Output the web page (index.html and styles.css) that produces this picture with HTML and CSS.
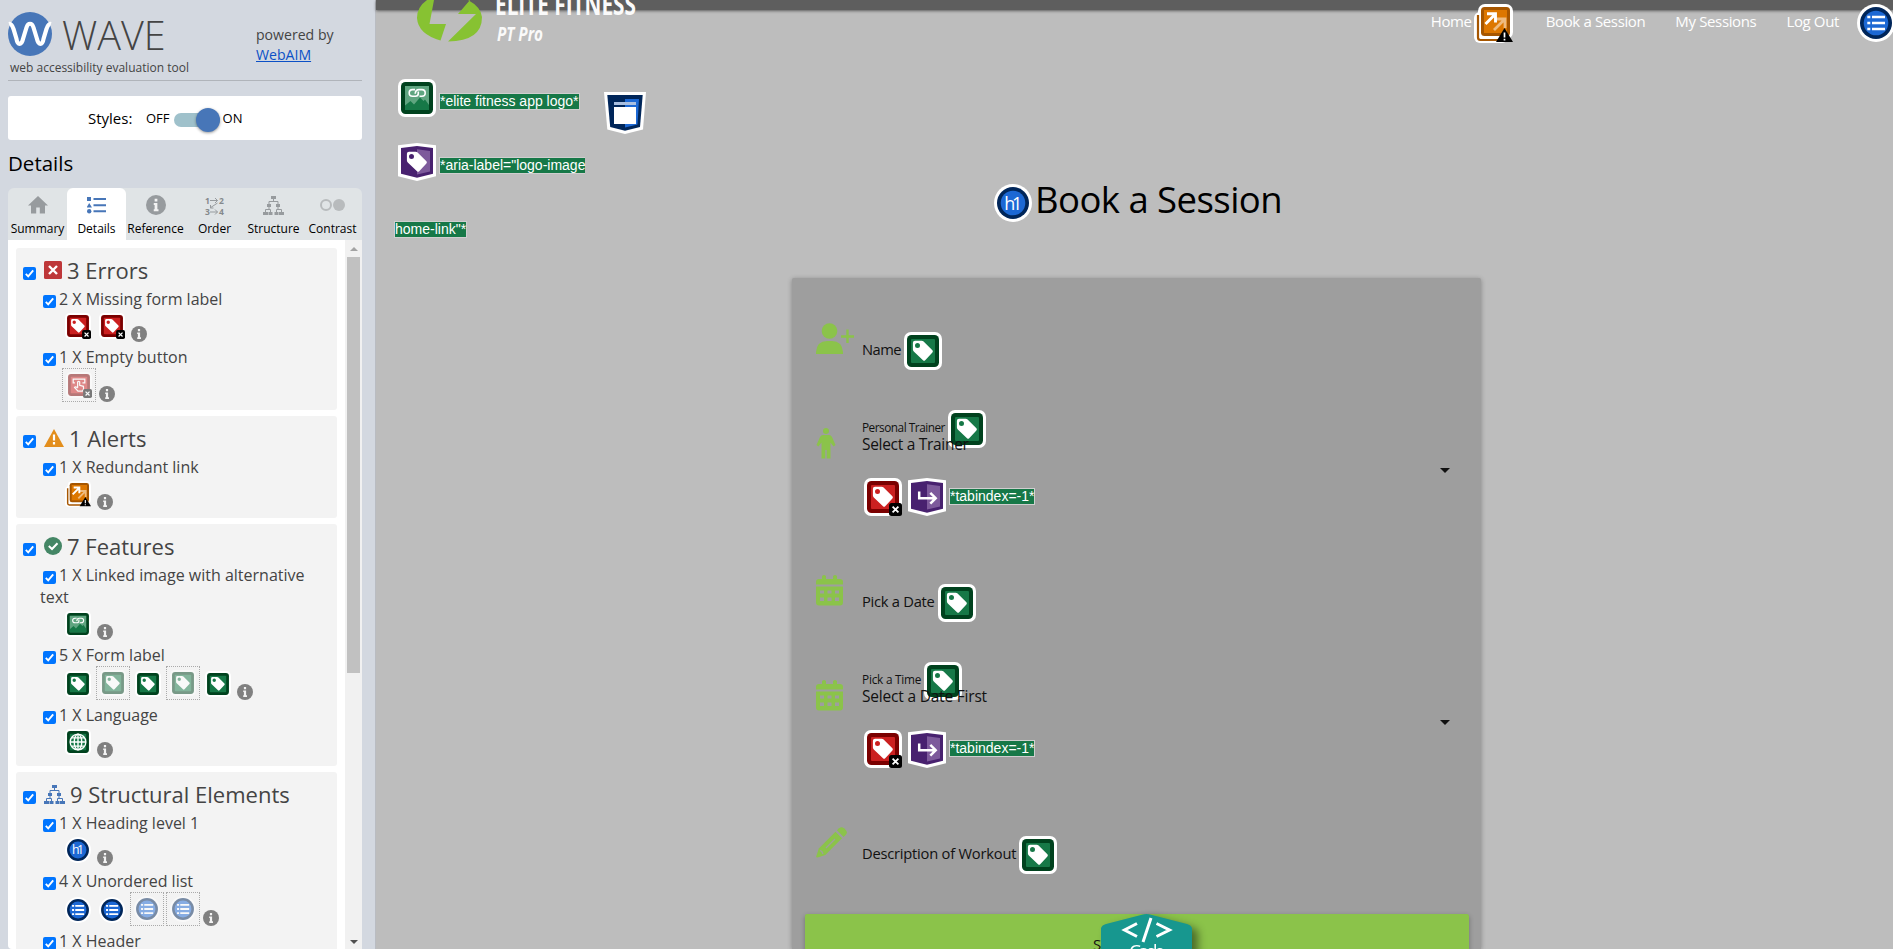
FILE: index.html
```html
<!DOCTYPE html>
<html lang="en">
<head>
<meta charset="utf-8">
<title>Book a Session</title>
<link rel="stylesheet" href="styles.css">
</head>
<body>
<svg class="defs" width="0" height="0" aria-hidden="true">
  <symbol id="tagshape" viewBox="0 0 38 38"><path fill-rule="evenodd" d="M11 8.7H17.6Q18.8 8.7 19.6 9.5L28.4 18.2Q29.4 19.3 28.4 20.4L21.2 28.2Q20.1 29.3 19 28.2L9.8 19.4Q8.9 18.5 8.9 17.4V10.8Q8.9 8.7 11 8.7ZM13.5 11A2.5 2.5 0 1 0 13.5 16A2.5 2.5 0 1 0 13.5 11Z" fill="#fff"/></symbol>
  <symbol id="xbadge" viewBox="0 0 38 38"><rect x="25" y="25" width="13" height="13" rx="2.5" fill="#000"/><path d="M28.6 28.6L34.4 34.4M34.4 28.6L28.6 34.4" stroke="#fff" stroke-width="1.8"/></symbol>
  <symbol id="greenbox" viewBox="0 0 38 38"><rect width="38" height="38" rx="7" fill="#fff"/><rect x="3" y="3" width="32" height="32" rx="4.5" fill="#00421e"/><rect x="7" y="7" width="24" height="24" rx="1" fill="#167847"/></symbol>
  <symbol id="redbox" viewBox="0 0 38 38"><rect width="38" height="38" rx="7" fill="#fff"/><rect x="3" y="3" width="32" height="32" rx="4.5" fill="#7b0000"/><rect x="7" y="7" width="24" height="24" rx="1" fill="#cb2020"/></symbol>
  <symbol id="bluedisc" viewBox="0 0 38 38"><circle cx="19" cy="19" r="19" fill="#fff"/><circle cx="19" cy="19" r="16" fill="#00265a"/><circle cx="19" cy="19" r="12.3" fill="#1c68d4"/></symbol>
  <symbol id="purplehex" viewBox="0 0 38 38"><path d="M0 2.3L19 0L38 2.3V33.3L19 38L0 33.3Z" fill="#fff"/><path d="M3 5L19 3L35 5V30.8L19 34.8L3 30.8Z" fill="#48216f"/><path d="M19 6.2L32 8V28.4L19 31.6Z" fill="#7d5a9b"/></symbol>
  <symbol id="label-ok" viewBox="0 0 38 38"><use href="#greenbox"/><use href="#tagshape"/></symbol>
  <symbol id="label-missing" viewBox="0 0 38 38"><use href="#redbox"/><use href="#tagshape"/><use href="#xbadge"/></symbol>
  <symbol id="button-empty" viewBox="0 0 38 38"><use href="#redbox"/><g fill="none" stroke="#fff" stroke-width="1.8"><path d="M13 16H10.5V10.5H27.5V16H24"/><path d="M17 23V14.5Q18.5 13 20 14.5V19.500L25.500 21Q26.500 25 24 28H17.500L12.500 22.500Q14 20.500 17 23.500"/></g><use href="#xbadge"/></symbol>
  <symbol id="aria-label" viewBox="0 0 38 38"><use href="#purplehex"/><use href="#tagshape"/></symbol>
  <symbol id="tabindex" viewBox="0 0 38 38"><use href="#purplehex"/><path d="M11.200 13.500V20.200H27.500M22.300 14.800L27.700 20.200L22.300 25.600" fill="none" stroke="#fff" stroke-width="2.500"/></symbol>
  <symbol id="image-link" viewBox="0 0 38 38"><use href="#greenbox"/><rect x="7" y="7" width="24" height="24" fill="#5fa580"/><path d="M7 26.500L12.500 22L16 25.500L22 18.500L25.500 22L27 20.500L31 26V31H7Z" fill="#167847"/><path d="M17 10.600H14.500A3.300 3.300 0 0 0 14.500 17.200H17.300Q20.300 17.200 20.300 14.500V12.500M21.500 17.200H23.900A3.300 3.300 0 0 0 23.900 10.600H20.900Q17.500 10.600 17.200 14.800" fill="none" stroke="#fff" stroke-width="1.600"/></symbol>
  <symbol id="lang" viewBox="0 0 38 38"><use href="#greenbox"/><g fill="none" stroke="#fff" stroke-width="2"><circle cx="19" cy="19" r="11.500"/><ellipse cx="19" cy="19" rx="5.500" ry="11.500"/><path d="M19 7.500V30.500M7.500 19H30.500M9.500 13H28.500M9.500 25H28.500"/></g></symbol>
  <symbol id="link-redundant" viewBox="0 0 39 39"><rect x="0" y="8" width="34" height="31" rx="6" fill="#fff"/><rect x="4" y="0" width="35" height="35" rx="7" fill="#fff"/><path d="M4 11V33.500Q4 36 6.500 36H26" fill="none" stroke="#a65600" stroke-width="2.200"/><rect x="7" y="3" width="29" height="29" rx="3.500" fill="#a65600"/><rect x="10" y="6" width="23" height="23" fill="#dd7700"/><path d="M20 26L30 16M22 15H31V24" fill="none" stroke="#eebb80" stroke-width="2.800"/><path d="M11.500 20L20.500 11M13 9.700H21.500V18.500" fill="none" stroke="#fff" stroke-width="2.900"/><path d="M30.500 24L39 38H22Z" fill="#000"/><path d="M30.500 28.500V33.500M30.500 34.800V36.500" stroke="#fff" stroke-width="1.700"/></symbol>
  <symbol id="ul" viewBox="0 0 38 38"><use href="#bluedisc"/><path d="M15 13H28M15 19H28M15 25H28" stroke="#fff" stroke-width="2.700"/><path d="M10.300 13H13.300M10.300 19H13.300M10.300 25H13.300" stroke="#fff" stroke-width="2.700"/></symbol>
  <symbol id="h1" viewBox="0 0 38 38"><use href="#bluedisc"/><text x="10.300" y="25.500" class="h1-glyph" textLength="17.500">h1</text></symbol>
  <symbol id="header-el" viewBox="0 0 42 42"><path d="M0 0H42L39 37.500L21 42L3.300 37.500Z" fill="#fff"/><path d="M3.300 3H38.700L36 35L21 38.800L6.200 35Z" fill="#00265a"/><path d="M21 7H35L33.500 32.500L21 35.500Z" fill="#1c68d4"/><rect x="10" y="10" width="22" height="3" fill="#a9bfe0"/><rect x="10" y="15" width="22" height="17" fill="#fff"/></symbol>
  <symbol id="info" viewBox="0 0 16 16"><circle cx="8" cy="8" r="8" fill="currentColor"/><path d="M6.900 3H9.100V5.200H6.900ZM6.200 6.400H9.100V11.300H10V12.900H6.200V11.300H6.900V8H6.200Z" fill="#f3f3f3"/></symbol>
  <symbol id="tree" viewBox="0 0 21 19"><g fill="currentColor"><rect x="8" width="5" height="3"/><rect x="4" y="8" width="4" height="3"/><rect x="13" y="8" width="4" height="3"/><rect y="16" width="5" height="3"/><rect x="5.500" y="16" width="4" height="3"/><rect x="11.500" y="16" width="4" height="3"/><rect x="16" y="16" width="5" height="3"/></g><path d="M10.500 3V5.500M6 8V5.500H15V8M6 11V13.500M15 11V13.500M2.500 16V13.500H7.500V16M13.500 16V13.500H18.500V16" fill="none" stroke="currentColor"/></symbol>
  <symbol id="check" viewBox="0 0 13 13"><rect width="13" height="13" rx="2" fill="#0075ff"/><path d="M2.800 6.900L5.200 9.300L10.200 3.400" fill="none" stroke="#fff" stroke-width="1.900"/></symbol>
  <symbol id="calendar" viewBox="0 0 27 31"><path fill-rule="evenodd" d="M6 1.500Q6 0 8 0Q10 0 10 1.500V4H17V1.500Q17 0 19 0Q21 0 21 1.500V4H24Q27 4 27 7V9.500H0V7Q0 4 3 4H6ZM0 11.500H27V27.500Q27 30.500 24 30.500H3Q0 30.500 0 27.500ZM4 15.500V18.500H8V15.500ZM11.500 15.500V18.500H15.500V15.500ZM19 15.500V18.500H23V15.500ZM4 22.500V26H8V22.500ZM11.500 22.500V26H15.500V22.500ZM19 22.500V26H23V22.500Z" fill="#8bc34a"/></symbol>
</svg>

<div class="app">
  <aside class="sidebar">
    <header class="brand">
      <div class="brand-main">
        <div class="brand-row">
          <svg width="44" height="44" viewBox="0 0 44 44"><circle cx="22" cy="22" r="22" fill="#4776b8"/><path d="M1 12C3 11.500 4.500 14 5.500 17L8.500 27C9.500 33.500 13.500 33.500 15 27L18.500 15.500C20 10.500 24 10.500 25.500 15.500L29 27C30.500 33.500 34.500 33.500 35.500 27L38.500 17C39.500 14 41 11.500 43 12" fill="none" stroke="#fff" stroke-width="4.200"/></svg>
          <span class="brand-name">WAVE</span>
        </div>
        <div class="tagline">web accessibility evaluation tool</div>
      </div>
      <div class="powered">powered by<br><a>WebAIM</a></div>
    </header>
    <div class="styles-box">
      <span class="styles-label">Styles:</span><span class="tg">OFF</span><span class="switch"><i></i></span><span class="tg">ON</span>
    </div>
    <h2 class="details">Details</h2>
    <nav class="tabs">
      <div class="tab"><svg width="20" height="18" viewBox="0 0 20 18"><path d="M10 0L20 9.500H17V17.500H11.800V11.500H8.200V17.500H3V9.500H0Z" fill="#979b9e"/></svg><span>Summary</span></div>
      <div class="tab active"><svg width="19" height="17" viewBox="0 0 19 17"><path d="M0 0H4V4H0ZM2.200 6L5 10.500H-.5Z" fill="#4776b8"/><circle cx="2.200" cy="14.300" r="2.200" fill="#4776b8"/><path d="M6.500 2H19M6.500 8.200H19M6.500 14.300H19" stroke="#4776b8" stroke-width="1.900"/></svg><span>Details</span></div>
      <div class="tab"><svg width="20" height="20"><use href="#info"/></svg><span>Reference</span></div>
      <div class="tab"><svg width="20" height="19" viewBox="0 0 20 19" class="order"><text x="0" y="7.500">1</text><text x="14" y="7.500">2</text><text x="0" y="19">3</text><text x="14" y="19">4</text><path d="M5 4.500H12.500M10 2L12.500 4.500L10 7M5 16H12.500M10 13.500L12.500 16L10 18.500M12.500 7L5 12M5.500 9V12H8.500" fill="none" stroke="#979b9e"/></svg><span>Order</span></div>
      <div class="tab"><svg width="21" height="19"><use href="#tree"/></svg><span>Structure</span></div>
      <div class="tab"><svg width="25" height="12" viewBox="0 0 25 12"><circle cx="6" cy="6" r="5" fill="none" stroke="#b8bbbd" stroke-width="2"/><circle cx="19" cy="6" r="6" fill="#b8bbbd"/></svg><span>Contrast</span></div>
    </nav>
    <div class="panel">
      <div class="cards">
        <section class="card">
          <h3 class="ttl"><svg class="cb"><use href="#check"/></svg><svg class="g18" viewBox="0 0 18 18"><rect width="18" height="18" rx="1.500" fill="#be3739"/><path d="M5 5L13 13M13 5L5 13" stroke="#fff" stroke-width="2.400"/></svg><span>3 Errors</span></h3>
          <p class="item"><svg class="cb"><use href="#check"/></svg><span>2 X Missing form label</span></p>
          <div class="icons"><svg class="ic"><use href="#label-missing"/></svg><svg class="ic"><use href="#label-missing"/></svg><svg class="inf"><use href="#info"/></svg></div>
          <p class="item"><svg class="cb"><use href="#check"/></svg><span>1 X Empty button</span></p>
          <div class="icons tall"><span class="dim"><svg class="ic"><use href="#button-empty"/></svg></span><svg class="inf"><use href="#info"/></svg></div>
        </section>
        <section class="card">
          <h3 class="ttl"><svg class="cb"><use href="#check"/></svg><svg class="g20" viewBox="0 0 20 18"><path d="M10 0L20 18H0Z" fill="#e38e1c"/><path d="M10 5.500V11.500M10 13V15.500" stroke="#fff" stroke-width="2.200"/></svg><span>1 Alerts</span></h3>
          <p class="item"><svg class="cb"><use href="#check"/></svg><span>1 X Redundant link</span></p>
          <div class="icons"><svg class="ic"><use href="#link-redundant"/></svg><svg class="inf"><use href="#info"/></svg></div>
        </section>
        <section class="card">
          <h3 class="ttl"><svg class="cb"><use href="#check"/></svg><svg class="g18" viewBox="0 0 18 18"><circle cx="9" cy="9" r="9" fill="#448665"/><path d="M4.800 9L8 12L13.500 6.300" fill="none" stroke="#fff" stroke-width="2"/></svg><span>7 Features</span></h3>
          <p class="item two"><svg class="cb"><use href="#check"/></svg><span>1 X Linked image with alternative text</span></p>
          <div class="icons"><svg class="ic"><use href="#image-link"/></svg><svg class="inf"><use href="#info"/></svg></div>
          <p class="item"><svg class="cb"><use href="#check"/></svg><span>5 X Form label</span></p>
          <div class="icons tall"><svg class="ic"><use href="#label-ok"/></svg><span class="dim"><svg class="ic"><use href="#label-ok"/></svg></span><svg class="ic"><use href="#label-ok"/></svg><span class="dim"><svg class="ic"><use href="#label-ok"/></svg></span><svg class="ic"><use href="#label-ok"/></svg><svg class="inf"><use href="#info"/></svg></div>
          <p class="item"><svg class="cb"><use href="#check"/></svg><span>1 X Language</span></p>
          <div class="icons"><svg class="ic"><use href="#lang"/></svg><svg class="inf"><use href="#info"/></svg></div>
        </section>
        <section class="card">
          <h3 class="ttl"><svg class="cb"><use href="#check"/></svg><svg class="g21"><use href="#tree"/></svg><span>9 Structural Elements</span></h3>
          <p class="item"><svg class="cb"><use href="#check"/></svg><span>1 X Heading level 1</span></p>
          <div class="icons"><svg class="ic"><use href="#h1"/></svg><svg class="inf"><use href="#info"/></svg></div>
          <p class="item"><svg class="cb"><use href="#check"/></svg><span>4 X Unordered list</span></p>
          <div class="icons tall"><svg class="ic"><use href="#ul"/></svg><svg class="ic"><use href="#ul"/></svg><span class="dim"><svg class="ic"><use href="#ul"/></svg></span><span class="dim"><svg class="ic"><use href="#ul"/></svg></span><svg class="inf"><use href="#info"/></svg></div>
          <p class="item"><svg class="cb"><use href="#check"/></svg><span>1 X Header</span></p>
        </section>
      </div>
      <div class="scroll"><b class="up"></b><i class="thumb"></i><b class="down"></b></div>
    </div>
  </aside>

  <main class="page">
    <div class="topbar"></div>
    <div class="head">
      <div class="logo-col">
        <svg class="logo" width="260" height="56" viewBox="0 0 260 56">
          <path d="M38 0H32Q22 7 22 18Q23 34 45.500 40.500L51 24H34.500L39 0ZM75 0L63 14H81L53 41.500Q87 41 87 17Q86 7 73 0Z" fill="#87c232"/>
          <text x="100" y="15" class="lg1" textLength="141" lengthAdjust="spacingAndGlyphs">ELITE FITNESS</text>
          <text x="102" y="41" class="lg2" textLength="46" lengthAdjust="spacingAndGlyphs">PT Pro</text>
        </svg>
        <div class="note"><svg class="big"><use href="#image-link"/></svg><span class="txt">*elite fitness app logo*</span></div>
        <div class="note n2"><svg class="big"><use href="#aria-label"/></svg><span class="txt open">*aria-label="logo-image</span></div>
        <div class="note n3"><span class="txt">home-link"*</span></div>
      </div>
      <svg class="hex"><use href="#header-el"/></svg>
      <nav class="links">
        <a>Home</a><svg class="big39"><use href="#link-redundant"/></svg><a class="l2">Book a Session</a><a class="l3">My Sessions</a><a class="l4">Log Out</a><svg class="big ulb"><use href="#ul"/></svg>
      </nav>
    </div>
    <h1 class="title"><svg class="big"><use href="#h1"/></svg><span>Book a Session</span></h1>
    <form class="sheet">
      <div class="field">
        <svg width="38" height="31" viewBox="0 0 38 31"><circle cx="13.500" cy="8" r="7.800" fill="#8bc34a"/><path d="M0 31V29Q1 18 11 18H16Q26 18 27 29V31ZM30.300 6.500H32.700V12.300H38V14.700H32.700V20H30.300V14.700H25V12.300H30.300Z" fill="#8bc34a"/></svg>
        <div class="fl"><span class="lbl nm">Name</span><svg class="big"><use href="#label-ok"/></svg></div>
      </div>
      <div class="field sel">
        <svg width="20" height="31" viewBox="0 0 20 31"><circle cx="10" cy="3" r="3" fill="#8bc34a"/><path d="M7 7H13Q15 7 16 9L19.500 17L17.500 18.500L14.500 14.500V30.500H10.700V22H9.300V30.500H5.500V14.500L2.500 18.500L.5 17L4 9Q5 7 7 7Z" fill="#8bc34a"/></svg>
        <div class="fs">
          <div class="small"><span class="sl s1">Personal Trainer</span><svg class="big"><use href="#label-ok"/></svg></div>
          <div class="value v1">Select a Trainer</div>
          <div class="marks"><svg class="big"><use href="#label-missing"/></svg><svg class="big"><use href="#tabindex"/></svg><span class="txt">*tabindex=-1*</span></div>
        </div>
        <i class="caret"></i>
      </div>
      <div class="field">
        <svg width="27" height="31"><use href="#calendar"/></svg>
        <div class="fl"><span class="lbl">Pick a Date</span><svg class="big"><use href="#label-ok"/></svg></div>
      </div>
      <div class="field sel">
        <svg width="27" height="31"><use href="#calendar"/></svg>
        <div class="fs">
          <div class="small"><span class="sl s2">Pick a Time</span><svg class="big"><use href="#label-ok"/></svg></div>
          <div class="value">Select a Date First</div>
          <div class="marks"><svg class="big"><use href="#label-missing"/></svg><svg class="big"><use href="#tabindex"/></svg><span class="txt">*tabindex=-1*</span></div>
        </div>
        <i class="caret"></i>
      </div>
      <div class="field last">
        <svg width="31" height="31" viewBox="0 0 31 31"><path d="M19.500 4.800L26 11.300L9.300 28L1.500 30.500Q0 30.800 .3 29.300L2.800 21.500Z" fill="#8bc34a"/><path d="M21 3.300L23 1.300Q25.500-1 28 1.300L29.700 3Q32 5.500 29.700 8L27.600 9.900Z" fill="#8bc34a"/><path d="M10 21L19 12M4 23.500L5.800 24.500L7 27" fill="none" stroke="#9e9e9e" stroke-width="1.400"/></svg>
        <div class="fl"><span class="lbl ds">Description of Workout</span><svg class="big"><use href="#label-ok"/></svg></div>
      </div>
      <button class="submit" type="button"><span>Submit</span></button>
      <div class="code"><svg width="110" height="40" viewBox="0 0 110 40"><path d="M0 14Q1 11 5 10L41 .8Q45.500-.7 50 .8L86 10Q90 11 91 14V40H0Z" fill="#17978f"/><path d="M36 9.500L23.500 16L36 22.500M55.500 9.500L68.500 16L55.500 22.500M50 4L42 28" fill="none" stroke="#fff" stroke-width="3"/><text x="28" y="44" class="code-t" textLength="36">Code</text></svg></div>
    </form>
  </main>
</div>
</body>
</html>
```
FILE: styles.css
```css
* { box-sizing: border-box; }
body { margin: 0; font-family: "Open Sans", "Noto Sans", sans-serif; overflow: hidden; }
.defs { position: absolute; }
.app { display: flex; width: 1893px; height: 949px; overflow: hidden; }
svg { flex: none; display: block; }
.h1-glyph { font: 18px "Open Sans", sans-serif; fill: #fff; }

/* Sidebar */
.sidebar { width: 376px; height: 949px; padding: 0 13px 0 8px; background: #d3d8e0; border-right: 1px solid #b9bcc2; display: flex; flex-direction: column; flex: none; }
.brand { height: 81px; border-bottom: 1px solid #b0b4ba; display: flex; color: #444; flex: none; }
.brand-main { width: 248px; padding-top: 12px; }
.brand-row { display: flex; height: 44px; }
.brand-name { font-size: 39.500px; font-weight: 300; line-height: 46px; margin-left: 10px; }
.tagline { font-size: 12px; line-height: 16px; margin: 4px 0 0 2px; white-space: nowrap; }
.powered { font-size: 14.100px; line-height: 19.500px; padding-top: 25px; white-space: nowrap; }
.powered a { color: #0b50c6; text-decoration: underline; }
.styles-box { margin-top: 15px; height: 44px; background: #fff; border-radius: 3px; display: flex; align-items: center; padding-left: 80px; flex: none; }
.styles-label { font-size: 15px; width: 58px; }
.tg { font-size: 13px; }
.switch { width: 46px; height: 14px; margin: 3px 3px 0 4px; border-radius: 7px; background: #9fc1cb; display: flex; align-items: center; justify-content: flex-end; }
.switch i { width: 24px; height: 24px; border-radius: 50%; background: #4776b8; box-shadow: 0 1px 3px rgba(0,0,0,.4); }
.details { margin: 8px 0 0; font-size: 20.500px; font-weight: 400; line-height: 31px; height: 40px; flex: none; }
.tabs { display: flex; height: 52px; flex: none; background: #e0e4e6; border-radius: 6px 6px 0 0; }
.tab { width: 59px; display: grid; grid-template-rows: 34px 18px; justify-items: center; align-items: center; font-size: 12px; white-space: nowrap; }
.tab span { line-height: 14px; height: 18px; }
.tab svg { color: #979b9e; }
.tab.active { background: #fff; border-radius: 6px 6px 0 0; }
.order { overflow: visible; }
.order text { font: bold 8.500px "Open Sans", sans-serif; fill: #85898c; }
.panel { flex: 1; background: #fff; display: flex; justify-content: space-between; min-height: 0; overflow: hidden; border-radius: 0 0 0 4px; }
.cards { padding: 8px 0 0 8px; width: 329px; }
.card { background: #f3f3f3; border-radius: 3px; margin-bottom: 6px; padding-bottom: 2px; color: #444; }
.ttl { margin: 0; height: 42px; padding: 13px 0 0 7px; display: flex; font-size: 22px; font-weight: 400; line-height: 22px; }
.ttl span { margin-top: -2px; margin-left: 5px; white-space: nowrap; }
.cb { width: 13px; height: 13px; flex: none; }
.ttl .cb { margin: 6px 8px 0 0; }
.g18 { width: 18px; height: 18px; }
.g20 { width: 20px; height: 18px; }
.g21 { width: 21px; height: 19px; color: #4776b8; }
.item { margin: 0; display: flex; padding-left: 27px; line-height: 22px; font-size: 16px; height: 22px; }
.item .cb { margin: 5px 3px 0 0; }
.item span { margin-top: -2px; white-space: nowrap; }
.item.two { height: 44px; }
.item.two span { white-space: normal; width: 275px; margin-left: -19px; text-indent: 19px; }
.icons { display: flex; align-items: flex-end; gap: 2px; height: 36px; padding: 0 0 6px 46px; }
.icons.tall { height: 38px; }
.ic { width: 26px; height: 26px; margin: 0 3px 3px; }
.dim { width: 34px; height: 34px; flex: none; border: 1px dotted #aaa; display: grid; place-items: center; }
.dim .ic { margin: 0; opacity: .5; }
.inf { width: 16px; height: 16px; color: #808080; margin-left: 1px; }
.scroll { width: 17px; background: #f1f1f1; display: flex; flex-direction: column; align-items: center; flex: none; }
.scroll .up { margin-top: 7px; border: 4px solid transparent; border-top: 0; border-bottom-color: #a3a3a3; }
.scroll .thumb { width: 13px; height: 416px; margin-top: 6px; background: #c1c1c1; }
.scroll .down { margin: auto 0 5px; border: 4px solid transparent; border-bottom: 0; border-top-color: #505050; }

/* Page under evaluation */
.page { flex: 1; background: #bdbdbd; min-width: 0; display: flex; flex-direction: column; }
.topbar { height: 10px; background: #5e5e5e; box-shadow: 0 1px 3px rgba(0,0,0,.5); flex: none; }
.head { margin-top: -10px; height: 184px; display: flex; padding-left: 19px; flex: none; position: relative; }
.logo-col { width: 209px; flex: none; }
.lg1 { font: bold 29px "Open Sans", sans-serif; fill: #fafafa; }
.lg2 { font: italic bold 19px "Open Sans", sans-serif; fill: #fafafa; }
.note { display: flex; align-items: center; gap: 3px; margin-left: 3px; height: 38px; margin-top: 23px; }
.note .txt { margin-top: 7px; }
.note.n2 { margin-top: 26px; }
.note.n3 { margin: 26px 0 0 -1px; }
.txt { font: 14px/15px "Liberation Sans", Arial, sans-serif; height: 17px; color: #fff; background: #167847; border: 1px solid #cfcfcf; white-space: nowrap; flex: none; }
.txt.open { border-right: 0; }
.big { width: 38px; height: 38px; }
.big39 { width: 39px; height: 39px; margin: 4px 33px 0 2px; }
.hex { width: 42px; height: 42px; margin-top: 92px; }
.links { display: flex; margin-left: auto; color: #fff; font-size: 15px; letter-spacing: -.36px; line-height: 43px; white-space: nowrap; height: 44px; margin-right: -2px; }
.l2, .l3 { margin-right: 30px; }
.l4 { margin-right: 18px; }
.ulb { margin-top: 4px; }
.title { margin: 0 0 0 618px; height: 94px; display: flex; font-weight: 400; font-size: 36.500px; letter-spacing: -.55px; line-height: 38px; flex: none; }
.title span { margin: -4px 0 0 3px; white-space: nowrap; }
.sheet { width: 689px; margin-left: 416px; flex: 1; background: #9e9e9e; border-radius: 2px 2px 0 0; box-shadow: 0 1px 5px rgba(0,0,0,.3); padding: 45px 12px 0 13px; min-height: 0; }
.field { display: grid; grid-template-columns: 46px 1fr auto; padding-left: 11px; height: 105px; }
.field.sel { height: 147px; }
.field.last { height: 87px; }
.fl { display: flex; padding-top: 9px; }
.lbl { font-size: 14.700px; letter-spacing: -.26px; line-height: 34px; margin-right: 3px; color: #111; white-space: nowrap; }
.lbl.nm { letter-spacing: -.5px; }
.lbl.ds { letter-spacing: -.22px; }
.small { display: flex; height: 14px; margin-top: -8px; }
.small .big { margin: -10px 0 0 3px; }
.sl { font-size: 11.800px; line-height: 14px; color: #111; white-space: nowrap; }
.s1 { letter-spacing: -.48px; }
.s2 { letter-spacing: -.22px; }
.value { font-size: 15.500px; letter-spacing: -.2px; line-height: 21px; color: #111; position: relative; height: 22px; margin-top: 0; }
.v1 { letter-spacing: -.3px; }
.marks { display: flex; align-items: center; gap: 6px; margin: 22px 0 0 2px; }
.marks .txt { margin: -2px 0 0 -3px; }
.caret { margin: 40px 19px 0 0; width: 0; height: 0; border: 5px solid transparent; border-bottom: 0; border-top-color: #111; }
.submit { display: block; width: 664px; height: 60px; background: #8bc34a; border: 0; border-radius: 2px; box-shadow: 0 2px 5px rgba(0,0,0,.3); font: 15px/60px "Open Sans", sans-serif; text-align: left; padding: 0 0 0 288px; color: #111; }
.code { width: 110px; margin: -60px 0 0 296px; position: relative; filter: drop-shadow(6px 4px 4px rgba(0,0,0,.45)); }
.code-t { font: 19px "Open Sans", sans-serif; fill: #fff; }
```
